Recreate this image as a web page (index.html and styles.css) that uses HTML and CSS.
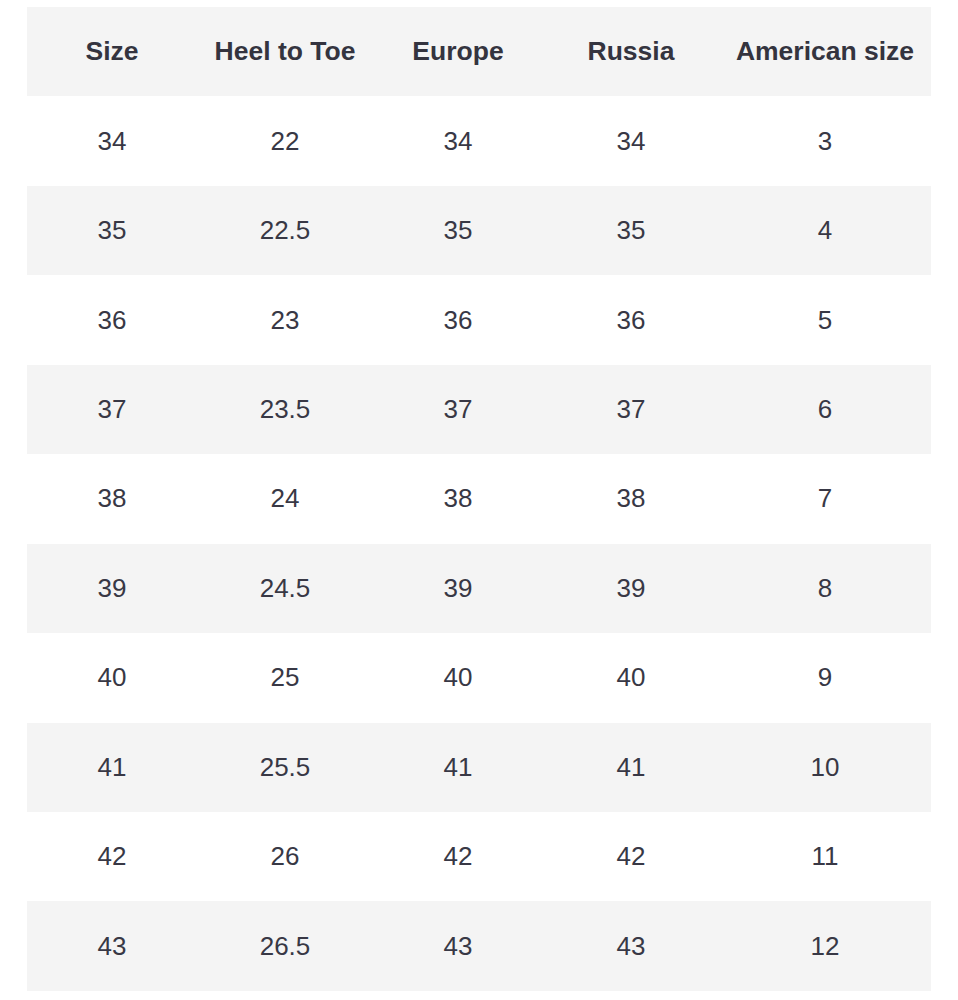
FILE: index.html
```html
<!DOCTYPE html>
<html>
<head>
<meta charset="utf-8">
<link rel="stylesheet" href="styles.css">
</head>
<body>
<table class="sizes">
  <colgroup>
    <col class="c1"><col class="c2"><col class="c3"><col class="c4"><col class="c5">
  </colgroup>
  <thead>
    <tr><th>Size</th><th>Heel to Toe</th><th>Europe</th><th>Russia</th><th>American size</th></tr>
  </thead>
  <tbody>
    <tr><td>34</td><td>22</td><td>34</td><td>34</td><td>3</td></tr>
    <tr><td>35</td><td>22.5</td><td>35</td><td>35</td><td>4</td></tr>
    <tr><td>36</td><td>23</td><td>36</td><td>36</td><td>5</td></tr>
    <tr><td>37</td><td>23.5</td><td>37</td><td>37</td><td>6</td></tr>
    <tr><td>38</td><td>24</td><td>38</td><td>38</td><td>7</td></tr>
    <tr><td>39</td><td>24.5</td><td>39</td><td>39</td><td>8</td></tr>
    <tr><td>40</td><td>25</td><td>40</td><td>40</td><td>9</td></tr>
    <tr><td>41</td><td>25.5</td><td>41</td><td>41</td><td>10</td></tr>
    <tr><td>42</td><td>26</td><td>42</td><td>42</td><td>11</td></tr>
    <tr><td>43</td><td>26.5</td><td>43</td><td>43</td><td>12</td></tr>
  </tbody>
</table>
</body>
</html>
```

FILE: styles.css
```css
html, body {
  margin: 0;
  padding: 0;
  background: #ffffff;
}
body {
  padding: 7px 0 0 27px;
  font-family: "Liberation Sans", Arial, sans-serif;
  color: #383845;
}
.sizes {
  border-collapse: collapse;
  table-layout: fixed;
  width: 904px;
}
.c1 { width: 170px; }
.c2 { width: 176px; }
.c3 { width: 170px; }
.c4 { width: 176px; }
.c5 { width: 212px; }
.sizes th, .sizes td {
  height: 89.45px;
  padding: 0;
  text-align: center;
  vertical-align: middle;
  font-size: 26px;
}
.sizes th {
  font-weight: bold;
  font-size: 26.5px;
  color: #34343f;
  background: #f4f4f4;
}
.sizes td {
  font-weight: normal;
}
.sizes tbody tr:nth-child(even) td {
  background: #f4f4f4;
}
```
